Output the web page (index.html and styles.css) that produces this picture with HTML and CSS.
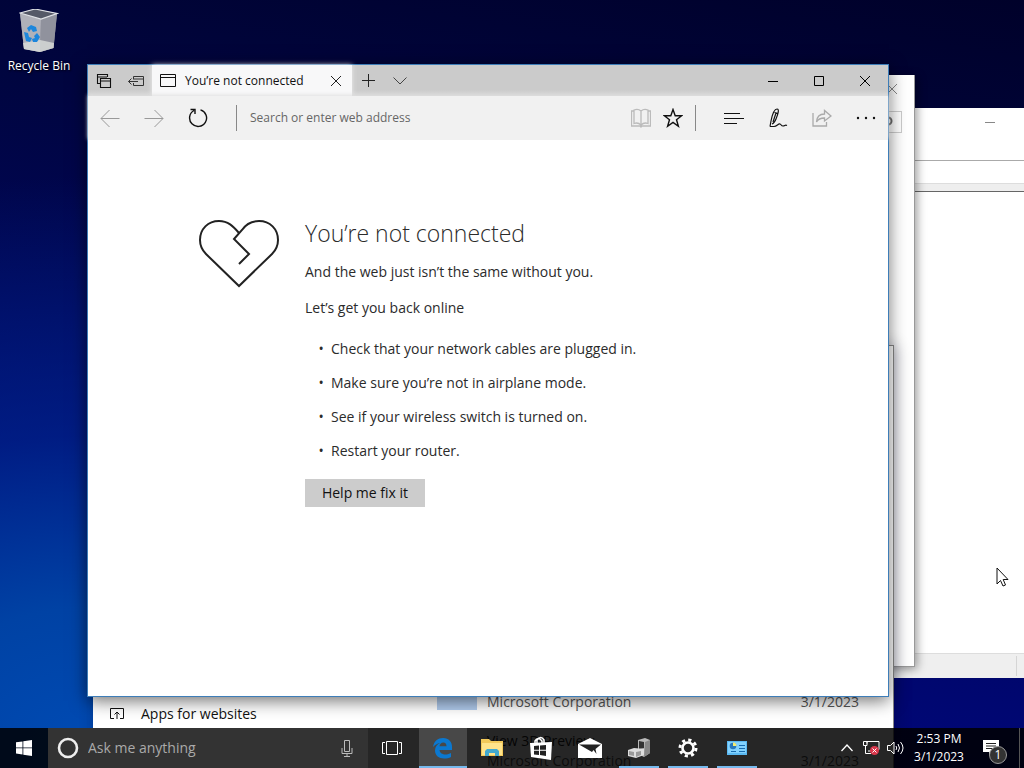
FILE: index.html
```html
<!DOCTYPE html>
<html lang="en">
<head>
<meta charset="utf-8">
<title>Desktop</title>
<link rel="stylesheet" href="styles.css">
</head>
<body>
<main class="desktop">
  <a class="desktop-icon" href="#recycle">
    <svg width="40" height="44" viewBox="0 0 40 44">
      <path d="M1 4 16 0l22 4.500-3.500 34.500L21 43 5 40z" fill="#9496a0"/>
      <path d="m1 4 21 6-1 33L5 40z" fill="#b0b1b9"/>
      <path d="m22 10 16-5.500L34.500 39 21 43z" fill="#90929d"/>
      <path d="M1 4 16 0l22 4.500L22 10z" fill="#555967" stroke="#e0e2e6" stroke-width="1.200"/>
      <path d="m4 34 17-3 14 3-.5 5L21 43 5 40z" fill="#dadddb" opacity=".8"/>
      <path d="m8 19 4-3 5 2 1 4-4 1-2-3-2 3zm-3 4 4 1 1 4 3 1-2 4-4-1zm10 4 3-3 3 4-3 5h-4l-1-3 3-1z" fill="#1c86dc"/>
    </svg>
    <span>Recycle Bin</span>
  </a>

  <section class="window explorer" aria-label="File window">
    <header class="explorer-title"><svg width="10" height="10"><path d="M0 5.500h10" stroke="#888"/></svg></header>
    <div class="explorer-address"></div>
    <div class="explorer-head"></div>
    <div class="explorer-body"></div>
    <footer class="explorer-status"><span></span></footer>
  </section>

  <section class="window panel" aria-label="Control panel window">
    <header class="panel-title"><svg width="10" height="10" viewBox="0 0 10 10"><path d="m0 0 10 10M10 0 0 10" stroke="#888"/></svg></header>
    <div class="panel-search"><svg width="10" height="12" viewBox="0 0 10 12"><circle cx="5" cy="5" r="3.500" fill="none" stroke="#666" stroke-width="2"/></svg></div>
  </section>

  <section class="window settings" aria-label="Settings">
    <nav class="settings-nav">
      <a href="#apps"><svg width="14" height="12" viewBox="0 0 14 12"><path d="M4 10.500H.5V.5h13v10H10M7 11V4M4.500 6.500 7 4l2.500 2.500" fill="none" stroke="#111"/></svg>Apps for websites</a>
    </nav>
    <ul class="app-list">
      <li><span class="app-tile"></span><div class="app-name"><b>Microsoft Application</b><span>Microsoft Corporation</span></div><time>3/1/2023</time></li>
      <li><span></span><div class="app-name"><b>View 3D Preview</b><span>Microsoft Corporation</span></div><time>3/1/2023</time></li>
    </ul>
  </section>

  <section class="window edge" aria-label="Browser">
    <header class="tabs">
      <button aria-label="Tabs set aside"><svg width="16" height="16" viewBox="0 0 16 16"><path d="M4 10.500H1.500v-9h10V4M1 4h10M4.500 5.500h10v9h-10zM4 8h11" fill="none" stroke="#111" stroke-width="1.100"/></svg></button>
      <button aria-label="Set tabs aside"><svg width="16" height="16" viewBox="0 0 16 16"><path d="M5.500 6V3.500h10v9h-10V10M5 6h10M.5 8.500H10M3.500 5.500l-3 3 3 3" fill="none" stroke="#333"/></svg></button>
      <div class="tab">
        <svg width="16" height="13" viewBox="0 0 16 13"><path d="M.5.5h15v12H.5zM0 3.500h16" fill="none" stroke="#111"/></svg>
        <span>You’re not connected</span>
        <button aria-label="Close tab"><svg width="10" height="10" viewBox="0 0 10 10"><path d="m0 0 10 10M10 0 0 10" stroke="#222"/></svg></button>
      </div>
      <button aria-label="New tab"><svg width="13" height="13" viewBox="0 0 13 13"><path d="M6.500 0v13M0 6.500h13" stroke="#222"/></svg></button>
      <button aria-label="Tab previews"><svg width="14" height="8" viewBox="0 0 14 8"><path d="m.5.5 6.500 6.500L13.500.5" fill="none" stroke="#444"/></svg></button>
      <div class="window-controls">
        <button aria-label="Minimize"><svg width="10" height="10"><path d="M0 5.500h10" stroke="#000"/></svg></button>
        <button aria-label="Maximize"><svg width="10" height="10"><path d="M.5.5h9v9h-9z" fill="none" stroke="#000"/></svg></button>
        <button aria-label="Close"><svg width="10" height="10"><path d="m0 0 10 10M10 0 0 10" stroke="#000"/></svg></button>
      </div>
    </header>
    <div class="toolbar">
      <button aria-label="Back"><svg width="20" height="20" viewBox="0 0 20 20"><path d="M19.500 10.500H1M9.500 2 1 10.500 9.500 19" fill="none" stroke="#999"/></svg></button>
      <button aria-label="Forward"><svg width="20" height="20" viewBox="0 0 20 20"><path d="M.5 10.500H19M10.500 2l8.500 8.500-8.500 8.500" fill="none" stroke="#999"/></svg></button>
      <button aria-label="Refresh"><svg width="20" height="20" viewBox="0 0 20 20"><path d="M12.500 1.800A8.500 8.500 0 1 1 6 2.500M2.500 1.500H7V6" fill="none" stroke="#111" stroke-width="1.400"/></svg></button>
      <i class="rule"></i>
      <input type="text" aria-label="Address" placeholder="Search or enter web address">
      <button class="narrow" aria-label="Reading view"><svg width="20" height="20" viewBox="0 0 20 20"><path d="M10 3v14M10 3C8 1.300 5 1.300 3 2v13.500c2-.8 5-.5 7 1.500 2-2 5-2.300 7-1.500V2c-2-.7-5-.7-7 1M3 3H.5v15H9l1 1 1-1h8.500V3H17" fill="none" stroke="#bbb" stroke-width="1.300"/></svg></button>
      <button class="narrow" aria-label="Favorites"><svg width="20" height="20" viewBox="0 0 20 20"><path d="m10 1.500 2.200 6.200h6.500l-5.200 4 1.900 6.500L10 14.400l-5.400 3.800 1.900-6.500-5.200-4h6.500z" fill="none" stroke="#111" stroke-width="1.400"/></svg></button>
      <i class="rule"></i>
      <button aria-label="Hub"><svg width="20" height="11" viewBox="0 0 20 11"><path d="M0 .5h16M0 5.500h20M0 10.500h13" stroke="#111"/></svg></button>
      <button aria-label="Web note"><svg width="20" height="20" viewBox="0 0 20 20"><path d="M2 18.500 3 13C4 8 6 1 9 1c2.700 0 .8 5.500-1 10-1 2.500-2.500 4.500-4 5M6.500 4.500l3 .8M2 18.500h4c3 0 4-3 6-2.500 1.500.5 1 2 3 2s2-1.500 4-.5M5 14 8 5" fill="none" stroke="#111" stroke-width="1.200"/></svg></button>
      <button aria-label="Share"><svg width="20" height="18" viewBox="0 0 20 18"><path d="M1 4v13h13.500v-4M4.500 13c.3-5.500 3-8 8-8V1.500l6.500 5.500-6.500 5V9c-4 0-6.500 1.200-8 4z" fill="none" stroke="#aaa" stroke-width="1.300"/></svg></button>
      <button aria-label="More"><svg width="20" height="4" viewBox="0 0 20 4"><g fill="#111"><circle cx="2" cy="2" r="1.200"/><circle cx="10" cy="2" r="1.200"/><circle cx="18" cy="2" r="1.200"/></g></svg></button>
    </div>
    <article class="page">
      <svg class="heart" width="82" height="70" viewBox="0 0 82 70"><path d="M41 14C35 7 30 2 21 2 10 2 2 10 2 21c0 6 2 10 6 14l33 32 33-32c4-4 6-8 6-14 0-11-8-19-19-19-8 0-13 3-17 9l-8 9 15 15-10 10" fill="none" stroke="#222" stroke-width="2"/></svg>
      <div class="message">
        <h1>You’re not connected</h1>
        <p>And the web just isn’t the same without you.</p>
        <p>Let’s get you back online</p>
        <ul>
          <li>Check that your network cables are plugged in.</li>
          <li>Make sure you’re not in airplane mode.</li>
          <li>See if your wireless switch is turned on.</li>
          <li>Restart your router.</li>
        </ul>
        <button>Help me fix it</button>
      </div>
    </article>
  </section>

  <footer class="taskbar">
    <button class="start" aria-label="Start"><svg width="16" height="16" viewBox="0 0 16 16"><path d="m0 2.300 6.500-.9v6.100H0zm7.300-1L16 0v7.500H7.300zM0 8.300h6.500v6.200L0 13.600zm7.300 0H16V16l-8.700-1.300z" fill="#fff"/></svg></button>
    <div class="cortana">
      <svg width="22" height="22" viewBox="0 0 22 22"><circle cx="11" cy="11" r="9" fill="none" stroke="#eee" stroke-width="2.600"/></svg>
      <input type="text" aria-label="Search" placeholder="Ask me anything">
      <button aria-label="Speak"><svg width="12" height="17" viewBox="0 0 12 17"><path d="M3.500.5h5v11h-5zM1 8v5.500h10V8M6 13.500V16M3 16.500h6" fill="none" stroke="#bbb"/></svg></button>
    </div>
    <button class="views" aria-label="Task view"><svg width="20" height="14" viewBox="0 0 20 14"><path d="M4.500.5h11v13h-11zM3 1.500H.5v11H3M17 1.500h2.500v11H17" fill="none" stroke="#fff"/></svg></button>
    <div class="apps">
      <button class="active open" aria-label="Edge"><svg width="22" height="22" viewBox="0 0 22 22"><path d="M1 10C2 4 6 1 11 1c6 0 9 4 9 9v3H7.500c.3 3 3 4.500 6 4.500 2 0 4-.6 5.500-1.500v4c-2 1-4 1.500-7 1.500-5 0-9-3-9-8 0-3.500 2-6 5-7.500C5 6.500 3 8 1 10zm6.500-.7h7C14.500 7 13.500 5.500 11.300 5.500 9 5.500 7.800 7.300 7.500 9.300z" fill="#0b78d0"/></svg></button>
      <button aria-label="File Explorer"><svg width="22" height="20" viewBox="0 0 22 20"><path d="M0 1h8l2 2h12v15H0z" fill="#f3c95a"/><path d="M1 5h20v12H1z" fill="#ffe38b"/><path d="M4 18v-5l2-2h10l2 2v5h-4v-3H8v3z" fill="#42a9cf"/></svg></button>
      <button aria-label="Store"><svg width="22" height="24" viewBox="0 0 22 24"><path d="M7 7V4q4-5 7 0v3M5 7V5q3-5 7 0v2" fill="none" stroke="#fff" stroke-width="1.500"/><path d="m0 7 22-1-1 18L1 21z" fill="#fff"/><path d="m4 10 5-.4v4.200H4zm6-.5 6-.5v4.800h-6zM4 14.700h5V19l-5-.6zm6 0h6V20l-6-.9z" fill="#222"/></svg></button>
      <button aria-label="Mail"><svg width="24" height="20" viewBox="0 0 24 20"><path d="M0 6 12 0l12 6v14H0z" fill="#fff"/><path d="m1 6.500 13 7.500 1.500-2 3 4-1-5L23 6.500z" fill="#222"/></svg></button>
      <button class="open" aria-label="Devices"><svg width="22" height="20" viewBox="0 0 22 20"><path d="m10 2 7-2 5 2v13l-6 4-6-3z" fill="#b9b9b9"/><path d="m11 3 5 1v6l-5 1z" fill="#333"/><path d="m17 4 5-2v13l-6 4z" fill="#888"/><path d="m0 12 6-2 10 1v6l-8 3-8-2z" fill="#ddd"/><path d="m1 13 5 1v4l-5-1zm7 1 5-1v4l-5 2z" fill="#999"/></svg></button>
      <button class="open" aria-label="Settings"><svg width="20" height="20" viewBox="0 0 20 20"><circle cx="10" cy="10" r="5.500" fill="none" stroke="#fff" stroke-width="2.600"/><circle cx="10" cy="10" r="8" fill="none" stroke="#fff" stroke-width="3" stroke-dasharray="3.140 3.140"/></svg></button>
      <button class="open" aria-label="Control Panel"><svg width="20" height="16" viewBox="0 0 20 16"><path d="M0 1h20v14H0z" fill="#5bb9f2"/><path d="M1 2h18v11H1z" fill="#82d2ff"/><circle cx="6" cy="6" r="3.300" fill="#2878bd"/><path d="M6 6V2.500A3.500 3.500 0 0 1 9.500 6z" fill="#f5ec70"/><path d="M12 5.500h6M12 8.500h6M12 11.500h6M4 11.500h5" stroke="#176bb0"/></svg></button>
    </div>
    <div class="tray">
      <button aria-label="Hidden icons"><svg width="12" height="8" viewBox="0 0 12 8"><path d="m.5 7 5.500-6 5.500 6" fill="none" stroke="#fff" stroke-width="1.300"/></svg></button>
      <button aria-label="Network"><svg width="17" height="14" viewBox="0 0 17 14"><path d="M4 2.500V.5h12v8h-4M.5.5H4v4H.5zM2.500 5v7.500H8M5 10h4" fill="none" stroke="#fff"/><circle cx="11.500" cy="9.500" r="4.500" fill="#d9364b"/><path d="m9.500 7.500 4 4m0-4-4 4" stroke="#fff"/></svg></button>
      <button aria-label="Volume"><svg width="17" height="14" viewBox="0 0 17 14"><path d="M.5 4.500h3L7 1v12L3.500 9.500h-3zM9 5q1.500 2 0 4M11 3q3 4 0 8M13.500 1q5 6 0 12" fill="none" stroke="#fff"/></svg></button>
      <button class="clock"><time>2:53 PM<br>3/1/2023</time></button>
      <button class="notice" aria-label="Notifications"><svg width="16" height="16" viewBox="0 0 16 16"><path d="M0 0h16v12H9l-3 3.500V12H0z" fill="#fff"/><path d="M3 3.500h10M3 6h10M3 8.500h7" stroke="#222"/></svg><span class="count">1</span></button>
      <button class="show-desktop" aria-label="Show desktop"></button>
    </div>
  </footer>
  <svg class="cursor" width="13" height="20" viewBox="0 0 13 20"><path d="M1 1v16l3.500-3.500L7 19l2.500-1L7.200 12.500H12z" fill="#fff" stroke="#111"/></svg>
</main>
</body>
</html>
```

FILE: styles.css
```css
* { box-sizing: border-box; }
body {
  margin: 0;
  font: 14px/20px "Open Sans", "Noto Sans", sans-serif;
  color: #2b2b2b;
}
button, input {
  margin: 0;
  padding: 0;
  border: 0;
  background: none;
  font: inherit;
  color: inherit;
}
button {
  display: flex;
  align-items: center;
  justify-content: center;
}
input { min-width: 0; flex: 1; outline: 0; }
a { color: inherit; text-decoration: none; }
svg { display: block; flex: none; }
ul { margin: 0; padding: 0; }

.desktop {
  position: relative;
  height: 100vh;
  overflow: hidden;
  background:
    radial-gradient(ellipse 70% 75% at 8% 98%, #004bb4, #0042a4 25%, rgba(0, 42, 150, 0.6) 55%, rgba(0, 10, 96, 0) 100%),
    linear-gradient(190deg, #00012a, #00053e 25%, #00088a);
}
.desktop-icon {
  display: flex;
  flex-direction: column;
  align-items: center;
  gap: 3px;
  width: 78px;
  padding-top: 9px;
  color: #fff;
  font-size: 12px;
  text-shadow: 1px 1px 2px #000;
}

/* Windows */
.window {
  position: absolute;
  display: flex;
  flex-direction: column;
  background: #fff;
}
.explorer { top: 108px; right: -60px; bottom: 90px; left: 520px; }
.explorer-title { height: 52px; padding: 9px 89px; display: flex; justify-content: flex-end; }
.explorer-address { height: 24px; border-top: 1px solid #aaa; border-bottom: 1px solid #ddd; }
.explorer-head { height: 8px; background: #eee; border-bottom: 1px solid #666; }
.explorer-body { flex: 1; }
.explorer-status { display: flex; justify-content: flex-end; height: 25px; padding: 2px 67px; border-top: 1px solid #ddd; background: #efefef; }
.explorer-status span { border-left: 1px solid #d5d5d5; }

.panel { top: 75px; right: 109px; bottom: 101px; left: 300px; border-right: 1px solid #999; border-bottom: 1px solid #999; box-shadow: 2px 2px 9px rgba(0, 0, 0, 0.4); }
.panel-title { display: flex; justify-content: flex-end; padding: 9px 17px 17px; }
.panel-search { display: flex; justify-content: flex-end; align-items: center; height: 22px; margin-right: 12px; padding-right: 8px; border: 1px solid #ccc; }

.settings { top: 345px; right: 130px; bottom: -3px; left: 93px; flex-direction: row; align-items: flex-end; border-top: 1px solid #888; border-right: 1px solid #888; box-shadow: 2px 0 14px rgba(0, 0, 40, 0.3); }
.settings-nav { flex: 0 0 344px; padding: 0 17px 47px; color: #111; }
.settings-nav a { display: flex; align-items: center; gap: 17px; }
.app-list { flex: 1; padding-right: 34px; list-style: none; color: #555; }
.app-list li { display: grid; grid-template-columns: 40px 1fr auto; column-gap: 10px; height: 59px; align-items: end; }
.app-list li:first-child { height: 41px; }
.app-tile { align-self: start; height: 39px; background: #b0cbed; }
.app-name { display: flex; flex-direction: column; }
.app-name b { font-weight: 400; color: #222; }

.edge { top: 64px; right: 135px; bottom: 71px; left: 87px; border: 1px solid #3d7db8; box-shadow: 0 4px 16px rgba(0, 0, 0, 0.55); }
.tabs { display: flex; flex: none; height: 31px; background: linear-gradient(#cbcbcb 80%, #d6d6d6); font-size: 12px; color: #111; }
.tabs > button { width: 32px; }
.tab { display: flex; align-items: center; flex: 0 1 200px; padding-left: 8px; background: #f8f8f9; box-shadow: 0 0 5px #eee; }
.tab span { flex: 1; padding-left: 9px; white-space: nowrap; }
.tab button { width: 32px; height: 30px; }
.window-controls { display: flex; margin-left: auto; }
.window-controls button { width: 46px; }
.toolbar { display: flex; align-items: center; flex: none; height: 44px; background: #f1f1f1; box-shadow: 0 -1px 4px #e0e0e0; }
.toolbar button { width: 44px; height: 44px; }
.toolbar .narrow { width: 32px; }
.toolbar input { padding-left: 13px; font-size: 12px; }
.toolbar input::placeholder { color: #666; opacity: 1; }
.rule { width: 1px; height: 26px; margin: 0 16px 0 6px; background: #888; }
.toolbar .rule:nth-child(4) { margin: 0 0 0 16px; }

.page { display: flex; flex: 1; gap: 25px; padding: 76px 110px 0; background: #fff; }
.heart { margin-top: 3px; }
.message h1 { margin: 0 0 12px; font-size: 23px; font-weight: 300; line-height: 34px; }
.message p { margin: 0 0 16px; }
.message ul { display: flex; flex-direction: column; gap: 14px; margin: 21px 0 18px; padding-left: 26px; list-style-type: "•\a0\a0"; }
.message button { min-width: 120px; height: 28px; padding: 0 16px; background: #ccc; color: #111; }

/* Taskbar */
.taskbar { position: absolute; right: 0; bottom: 0; left: 0; display: flex; height: 40px; background: rgba(0, 0, 0, 0.85); color: #fff; }
.start { width: 48px; }
.cortana { display: flex; align-items: center; flex: 0 1 320px; padding-left: 9px; background: #333; }
.cortana input { padding-left: 9px; }
.cortana input::placeholder { color: #aaa; opacity: 1; }
.cortana button { width: 42px; height: 40px; }
.views { width: 48px; margin-right: 3px; }
.apps { display: flex; gap: 1px; }
.apps button { position: relative; width: 48px; }
.apps .active { background: #484848; }
.apps .open::after { content: ""; position: absolute; right: 4px; bottom: 0; left: 4px; height: 2px; background: #76b9ed; }
.apps .active::after { right: 0; left: 0; }
.tray { display: flex; margin-left: auto; font-size: 12px; line-height: 18px; }
.tray button { width: 24px; }
.tray .clock { width: 64px; }
.tray .notice { position: relative; width: 40px; margin-right: 8px; }
.count { position: absolute; right: 4px; bottom: 4px; width: 18px; height: 18px; border: 1px solid #999; border-radius: 50%; background: #333; line-height: 16px; }
.tray .show-desktop { width: 5px; border-left: 1px solid #555; }

.cursor { position: absolute; right: 15px; bottom: 181px; }
```
